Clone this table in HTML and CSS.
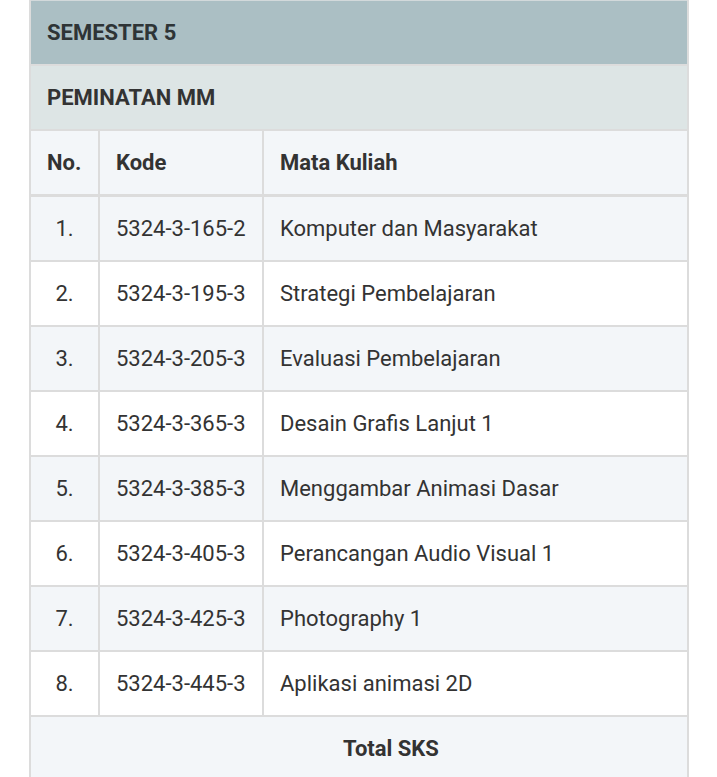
FILE: index.html
```html
<!DOCTYPE html>
<html>
<head>
<meta charset="utf-8">
<link rel="stylesheet" href="styles.css">
</head>
<body>
<table class="mk">
  <colgroup>
    <col class="c-no">
    <col class="c-kode">
    <col class="c-nama">
  </colgroup>
  <thead>
    <tr class="sem"><th colspan="3">SEMESTER 5</th></tr>
    <tr class="pem"><th colspan="3">PEMINATAN MM</th></tr>
    <tr class="head"><th>No.</th><th>Kode</th><th>Mata Kuliah</th></tr>
  </thead>
  <tbody>
    <tr class="odd"><td class="num">1.</td><td>5324-3-165-2</td><td>Komputer dan Masyarakat</td></tr>
    <tr><td class="num">2.</td><td>5324-3-195-3</td><td>Strategi Pembelajaran</td></tr>
    <tr class="odd"><td class="num">3.</td><td>5324-3-205-3</td><td>Evaluasi Pembelajaran</td></tr>
    <tr><td class="num">4.</td><td>5324-3-365-3</td><td>Desain Grafis Lanjut 1</td></tr>
    <tr class="odd"><td class="num">5.</td><td>5324-3-385-3</td><td>Menggambar Animasi Dasar</td></tr>
    <tr><td class="num">6.</td><td>5324-3-405-3</td><td>Perancangan Audio Visual 1</td></tr>
    <tr class="odd"><td class="num">7.</td><td>5324-3-425-3</td><td>Photography 1</td></tr>
    <tr><td class="num">8.</td><td>5324-3-445-3</td><td>Aplikasi animasi 2D</td></tr>
    <tr class="odd total"><th colspan="3">Total SKS</th></tr>
  </tbody>
</table>
</body>
</html>
```
FILE: styles.css
```css
html, body {
  margin: 0;
  padding: 0;
  background: #ffffff;
}
body {
  font-family: Roboto, "Liberation Sans", sans-serif;
  color: #333;
  padding-left: 29px;
}
.mk {
  border-collapse: collapse;
  width: 660px;
  table-layout: fixed;
  border: 2px solid #dcdcdc;
  border-top: 1px solid #d2d9db;
}
.c-no { width: 69px; }
.c-kode { width: 164px; }
.c-nama { width: auto; }
.mk th, .mk td {
  border: 2px solid #dcdcdc;
  height: 63px;
  padding: 0 16px;
  font-size: 22px;
  line-height: 26px;
  text-align: left;
  vertical-align: middle;
}
.mk th { font-weight: bold; }
.sem th {
  background: #abbfc4;
  border-top: 1px solid #d2d9db;
  color: #2e3436;
}
.pem th {
  background: #dde5e5;
}
.head th {
  background: #f3f6f9;
  border-bottom: 3px solid #dcdcdc;
}
.mk tbody td { background: #ffffff; }
.mk tbody tr.odd td, .mk tbody tr.odd th { background: #f3f6f9; }
.mk td.num { text-align: center; }
.mk tr.total th {
  text-align: center;
  padding-left: 80px;
}
```
